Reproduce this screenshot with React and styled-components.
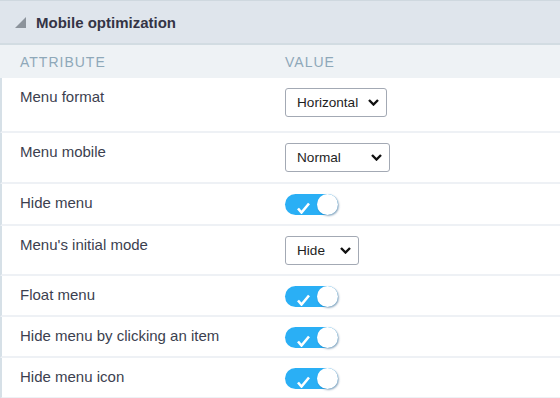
import React from "react";
import styled, { createGlobalStyle } from "styled-components";

const GlobalStyle = createGlobalStyle`
  body {
    margin: 0;
    background: #ffffff;
    font-family: "Liberation Sans", Arial, sans-serif;
  }
`;

export const Panel = styled.div`
  width: 560px;
  height: 398px;
  overflow: hidden;
  background: #ffffff;
`;

export const Header = styled.div`
  display: flex;
  align-items: center;
  gap: 10px;
  height: 42px;
  padding-left: 15px;
  background: #dfe5ec;
  border-top: 1px solid #cfd8df;
  border-bottom: 2px solid #d2dce2;
`;

export const Title = styled.h2`
  margin: 0;
  font-size: 15px;
  font-weight: bold;
  color: #343445;
`;

export const ColHead = styled.div`
  display: grid;
  grid-template-columns: 285px 1fr;
  align-items: center;
  height: 33px;
  background: #eef2f5;
`;

export const ColLabel = styled.div`
  padding-left: ${(p) => (p.$first ? "20px" : "0")};
  font-size: 14px;
  letter-spacing: 1px;
  text-transform: uppercase;
  color: #8ea8b9;
`;

export const Row = styled.div`
  display: grid;
  grid-template-columns: 283px 1fr;
  align-items: start;
  height: ${(p) => p.$h}px;
  border-left: 2px solid #d6e0e7;
  border-bottom: 2px solid #eef1f5;
  box-sizing: border-box;
`;

export const Label = styled.div`
  padding: 10px 0 0 18px;
  font-size: 15px;
  line-height: 18px;
  color: #3c3f4f;
`;

export const Value = styled.div`
  padding-top: 10px;
`;

export const SelectBox = styled.div`
  display: flex;
  align-items: center;
  justify-content: space-between;
  box-sizing: border-box;
  width: ${(p) => p.$w}px;
  height: 29px;
  padding: 0 7px 0 11px;
  border: 1px solid #a3a9b4;
  border-radius: 3px;
  background: #ffffff;
  font-size: 13.6px;
  color: #1e1e1e;
`;

export const Toggle = styled.div`
  position: relative;
  width: 53px;
  height: 21px;
  border-radius: 11px;
  background: #2aaff5;
`;

export const Knob = styled.span`
  position: absolute;
  right: 0;
  top: 0;
  width: 21px;
  height: 21px;
  border-radius: 50%;
  background: #ffffff;
  box-shadow: 1px 1px 2px rgba(0, 60, 110, 0.45);
`;

export const Check = styled.svg`
  position: absolute;
  left: 11px;
  top: 8px;
`;

const Chevron = () => (
  <svg width="11" height="7" viewBox="0 0 11 7">
    <path d="M1 1 L5.5 5.5 L10 1" fill="none" stroke="#111" strokeWidth="2.4" />
  </svg>
);

const Triangle = () => (
  <svg width="11" height="11" viewBox="0 0 11 11">
    <polygon points="11,0 11,11 0,11" fill="#8c939b" />
  </svg>
);

const Switch = () => (
  <Toggle>
    <Check width="15" height="12" viewBox="0 0 15 12">
      <path d="M2 6.5 L5.5 10.5 L13 1.5" fill="none" stroke="#fff" strokeWidth="2.6" />
    </Check>
    <Knob />
  </Toggle>
);

const rows = [
  { label: "Menu format", h: 55, select: "Horizontal", w: 102 },
  { label: "Menu mobile", h: 51, select: "Normal", w: 105 },
  { label: "Hide menu", h: 42 },
  { label: "Menu's initial mode", h: 50, select: "Hide", w: 74 },
  { label: "Float menu", h: 41 },
  { label: "Hide menu by clicking an item", h: 41 },
  { label: "Hide menu icon", h: 41 },
];

export default function App() {
  return (
    <>
      <GlobalStyle />
      <Panel>
        <Header>
          <Triangle />
          <Title>Mobile optimization</Title>
        </Header>
        <ColHead>
          <ColLabel $first>Attribute</ColLabel>
          <ColLabel>Value</ColLabel>
        </ColHead>
        {rows.map((r) => (
          <Row key={r.label} $h={r.h}>
            <Label>{r.label}</Label>
            <Value>
              {r.select ? (
                <SelectBox $w={r.w}>
                  {r.select}
                  <Chevron />
                </SelectBox>
              ) : (
                <Switch />
              )}
            </Value>
          </Row>
        ))}
      </Panel>
    </>
  );
}
